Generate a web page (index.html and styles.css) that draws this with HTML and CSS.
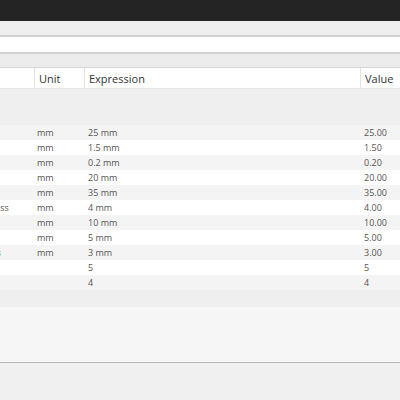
FILE: index.html
```html
<!DOCTYPE html>
<html lang="en">
<head>
    <meta charset="UTF-8">
    <title>Parameters</title>
    <link rel="stylesheet" href="styles.css">
</head>
<body>

<div class="titlebar"></div>
<div class="toolbar"></div>
<div class="field"></div>
<div class="filter"></div>

<!-- parameter table (scrolled a bit to the right) -->
<div class="view">
    <div class="grid head">
        <div class="cell">Name</div>
        <div class="cell">Unit</div>
        <div class="cell">Expression</div>
        <div class="cell">Value</div>
    </div>
    <div class="group"></div>
    <div class="grid row">
        <div class="cell">Length</div><div class="cell">mm</div><div class="cell">25 mm</div><div class="cell">25.00</div>
    </div>
    <div class="grid row">
        <div class="cell">Edge</div><div class="cell">mm</div><div class="cell">1.5 mm</div><div class="cell">1.50</div>
    </div>
    <div class="grid row">
        <div class="cell">Gap</div><div class="cell">mm</div><div class="cell">0.2 mm</div><div class="cell">0.20</div>
    </div>
    <div class="grid row">
        <div class="cell">Width</div><div class="cell">mm</div><div class="cell">20 mm</div><div class="cell">20.00</div>
    </div>
    <div class="grid row">
        <div class="cell">Height</div><div class="cell">mm</div><div class="cell">35 mm</div><div class="cell">35.00</div>
    </div>
    <div class="grid row">
        <div class="cell">WallThickness</div><div class="cell">mm</div><div class="cell">4 mm</div><div class="cell">4.00</div>
    </div>
    <div class="grid row">
        <div class="cell">Depth</div><div class="cell">mm</div><div class="cell">10 mm</div><div class="cell">10.00</div>
    </div>
    <div class="grid row">
        <div class="cell">Radius</div><div class="cell">mm</div><div class="cell">5 mm</div><div class="cell">5.00</div>
    </div>
    <div class="grid row">
        <div class="cell">BevelRadius</div><div class="cell">mm</div><div class="cell">3 mm</div><div class="cell">3.00</div>
    </div>
    <div class="grid row">
        <div class="cell">Columns</div><div class="cell"></div><div class="cell">5</div><div class="cell">5</div>
    </div>
    <div class="grid row">
        <div class="cell">Rows</div><div class="cell"></div><div class="cell">4</div><div class="cell">4</div>
    </div>
    <div class="empty"></div>
</div>

<div class="panel"></div>
<div class="status"></div>

</body>
</html>
```

FILE: styles.css
```css
body {
    margin: 0;
    padding: 0;
    width: 400px;
    height: 400px;
    overflow: hidden;
    background: #f0f0f0;
    font-family: "Open Sans", "Noto Sans", sans-serif;
    color: #555;
}

.titlebar {
    height: 21px;
    background: #242424;
}

.toolbar {
    height: 14px;
    background: #efefef;
    border-bottom: 2px solid #d2d2d2;
}

.field {
    height: 15px;
    background: #fff;
    border-bottom: 2px solid #d2d2d2;
}

.filter {
    height: 13px;
    background: #ececec;
    border-bottom: 1px solid #d6d6d6;
}

.view {
    overflow: hidden;
}

/* 이름 열은 왼쪽으로 스크롤된 상태 */
.grid {
    display: grid;
    grid-template-columns: 88px 50px 276px 80px;
    margin-left: -54px;
}

.cell {
    padding-left: 4px;
    white-space: nowrap;
    overflow: hidden;
}

.head {
    height: 20px;
    background: #fff;
    border-bottom: 1px solid #e8e8e8;
    font-size: 11px;
    line-height: 21px;
    color: #333;
}

.head .cell + .cell {
    border-left: 1px solid #e2e2e2;
}

.group {
    height: 36px;
    background: #efefef;
}

.row {
    height: 15px;
    font-size: 9px;
    line-height: 16px;
    background: #f4f4f4;
}

.row:nth-of-type(even) {
    background: #fff;
}

.row .cell:nth-child(2) {
    padding-left: 3px;
}

.empty {
    height: 17px;
    background: #efefef;
}

.panel {
    height: 55px;
    background: #f6f6f6;
    border-bottom: 1px solid #b8b8b8;
    box-shadow: 0 1px 0 #e2e2e2;
}

.status {
    height: 36px;
    background: #f0f0f0;
}
```
